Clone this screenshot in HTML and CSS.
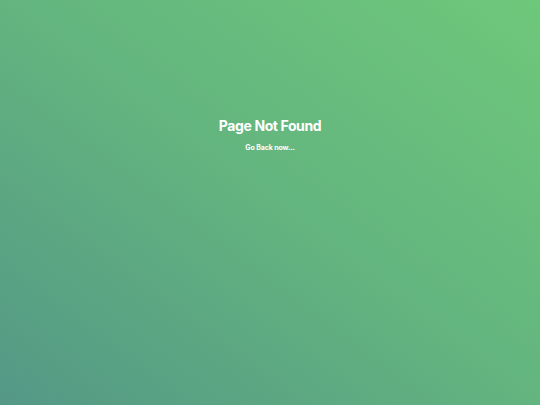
FILE: index.html
```html
<!DOCTYPE html>
<html>
<head>
<meta charset="utf-8">
<link rel="stylesheet" href="styles.css">
</head>
<body>
<main class="page">
  <div class="notfound">
    <h1 class="title">Page Not Found</h1>
    <a class="back" href="#">Go Back now...</a>
  </div>
</main>
</body>
</html>
```

FILE: styles.css
```css
html, body {
  margin: 0;
  padding: 0;
  height: 100%;
}
body {
  font-family: Inter, "Liberation Sans", sans-serif;
  background: linear-gradient(to top right, #549886 0%, #63b47f 50%, #6ec87a 100%);
}
.page {
  height: 100%;
  display: flex;
  justify-content: center;
}
.notfound {
  padding-top: 117px;
  display: flex;
  flex-direction: column;
  align-items: center;
}
.title {
  margin: 0;
  font-size: 14px;
  font-weight: 700;
  letter-spacing: -0.4px;
  color: #ffffff;
  line-height: 18px;
}
.back {
  margin-top: 8px;
  font-size: 7px;
  font-weight: 700;
  letter-spacing: -0.1px;
  color: #ffffff;
  text-decoration: none;
  line-height: 9px;
}
```
